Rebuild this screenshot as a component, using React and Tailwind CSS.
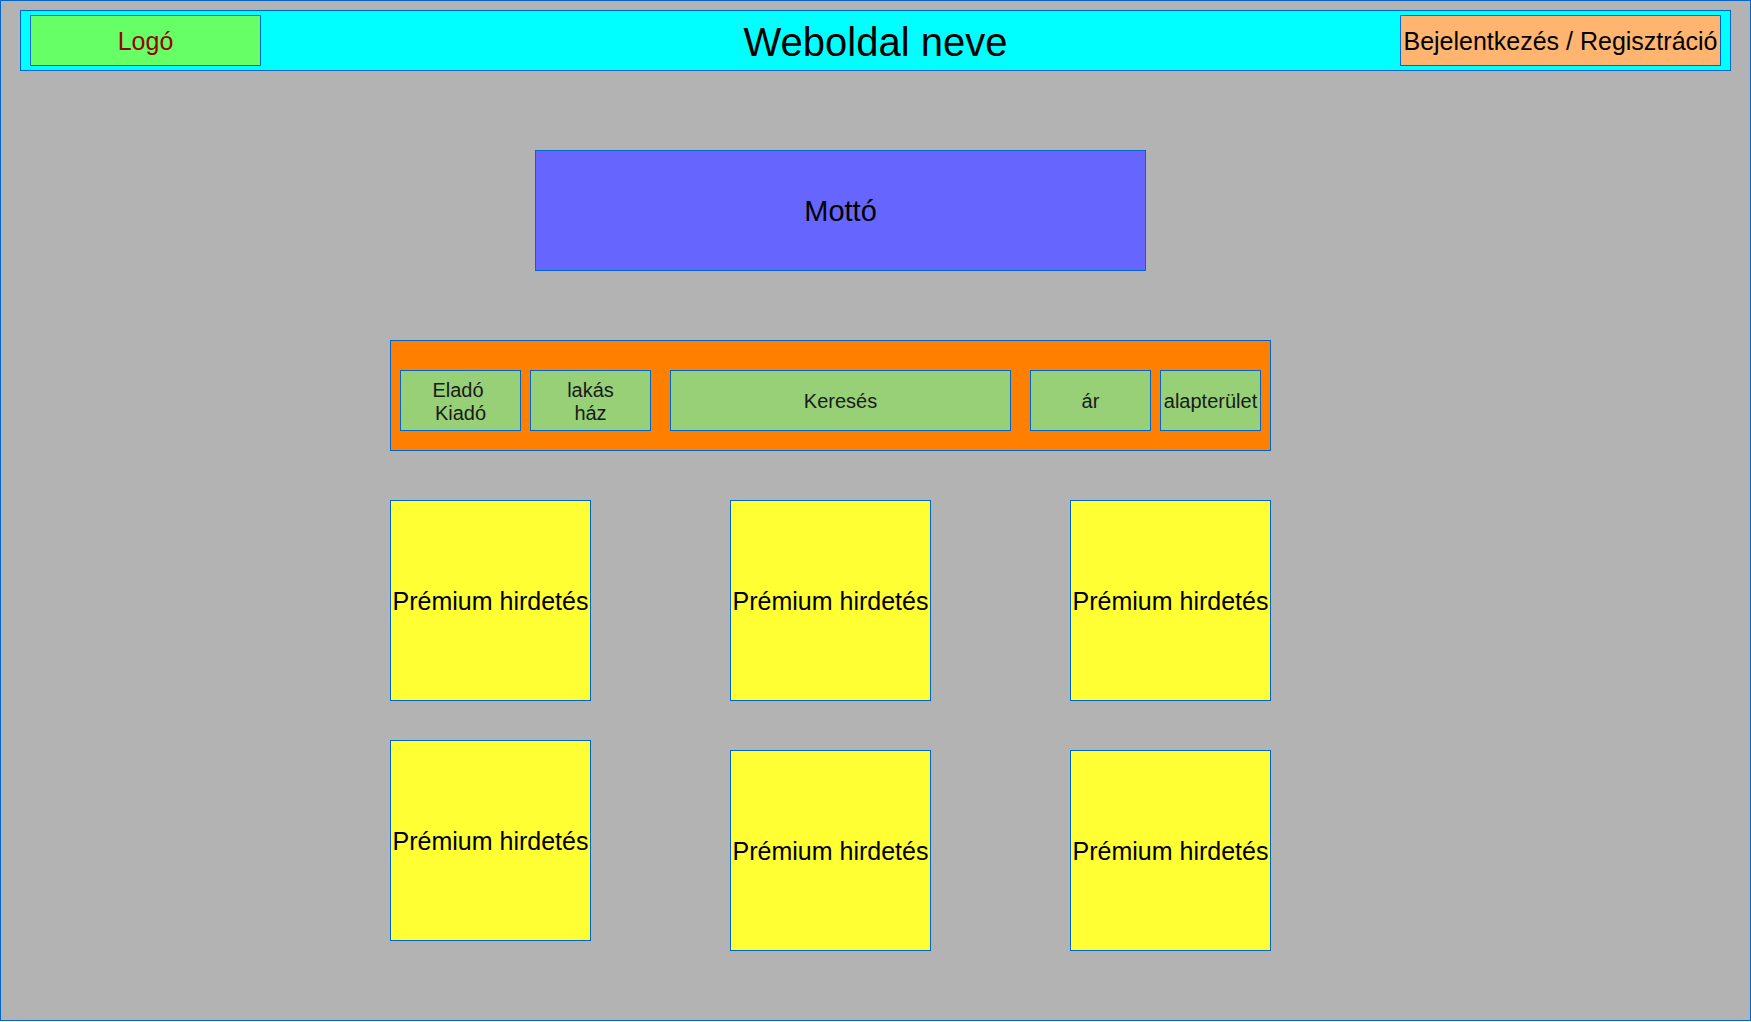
import React from "react";

const filters = [
  { label: ["Eladó", "Kiadó"], width: "w-[121px]", shiftFirst: true },
  { label: ["lakás", "ház"], width: "w-[121px]" },
  { label: ["Keresés"], width: "w-[341px]" },
  { label: ["ár"], width: "w-[121px]" },
  { label: ["alapterület"], width: "w-[101px]" },
];

const PremiumBox = () => (
  <div className="w-[201px] h-[201px] pt-[2px] bg-[#ffff33] border border-[#0066cc] flex items-center justify-center text-[25px] text-black whitespace-nowrap">
    Prémium hirdetés
  </div>
);

const FilterBox = ({ label, width, shiftFirst }) => (
  <div
    className={`${width} h-[61px] pt-[2px] bg-[#97d077] border border-[#0066cc] flex flex-col items-center justify-center text-[20px] leading-[23px] text-[#1a1a1a]`}
  >
    {label.map((line, i) => (
      <span key={line} className={shiftFirst && i === 0 ? "-ml-[5px]" : ""}>
        {line}
      </span>
    ))}
  </div>
);

export default function App() {
  return (
    <div
      className="w-[1751px] h-[1021px] bg-[#b3b3b3] border border-[#0066cc] flex flex-col"
      style={{ fontFamily: '"Liberation Sans", Arial, sans-serif' }}
    >
      {/* fejléc */}
      <header className="ml-[19px] mt-[9px] w-[1711px] h-[61px] bg-[#00ffff] border border-[#0066cc] px-[9px] grid grid-cols-[1fr_auto_1fr] items-center">
        <div className="w-[231px] h-[51px] pt-[2px] bg-[#66ff66] border border-[#0066cc] flex items-center justify-center text-[25px] text-[#990000]">
          Logó
        </div>
        <h1 className="pt-[2px] text-[40px] text-black leading-none">Weboldal neve</h1>
        <div className="justify-self-end w-[321px] h-[51px] pt-[2px] bg-[#ffb570] border border-[#0066cc] flex items-center justify-center text-[25px] text-black whitespace-nowrap">
          Bejelentkezés / Regisztráció
        </div>
      </header>

      {/* mottó */}
      <div className="ml-[534px] mt-[79px] w-[611px] h-[121px] pt-[2px] bg-[#6666ff] border border-[#0066cc] flex items-center justify-center text-[29px] text-black">
        Mottó
      </div>

      {/* kereső sáv */}
      <div className="ml-[389px] mt-[69px] w-[881px] h-[111px] bg-[#ff8000] border border-[#0066cc] px-[9px] pt-[29px] flex items-start">
        <div className="flex gap-[9px]">
          <FilterBox {...filters[0]} />
          <FilterBox {...filters[1]} />
        </div>
        <div className="ml-[19px]">
          <FilterBox {...filters[2]} />
        </div>
        <div className="ml-[19px] flex gap-[9px]">
          <FilterBox {...filters[3]} />
          <FilterBox {...filters[4]} />
        </div>
      </div>

      {/* prémium hirdetések */}
      <div className="ml-[389px] mt-[49px] flex gap-[139px] items-start">
        <div className="flex flex-col gap-[39px]">
          <PremiumBox />
          <PremiumBox />
        </div>
        <div className="flex flex-col gap-[49px]">
          <PremiumBox />
          <PremiumBox />
        </div>
        <div className="flex flex-col gap-[49px]">
          <PremiumBox />
          <PremiumBox />
        </div>
      </div>
    </div>
  );
}
